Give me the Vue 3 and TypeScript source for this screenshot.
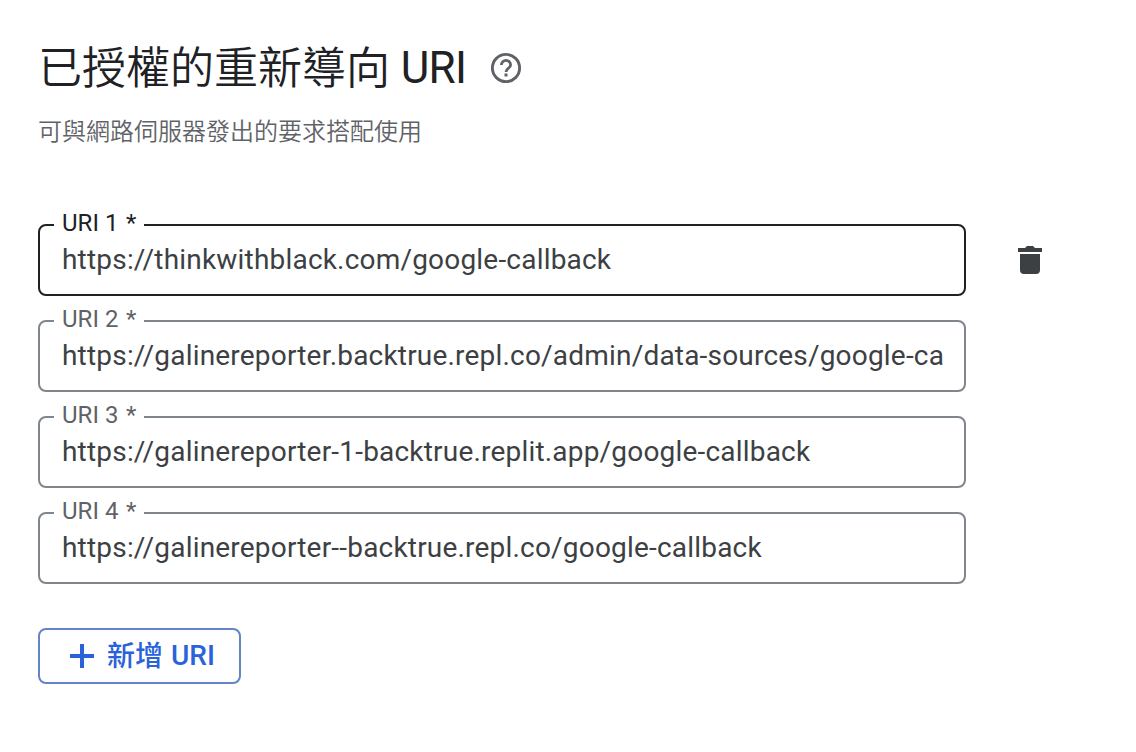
<script setup lang="ts">
import { ref } from 'vue'

interface UriField {
  id: number
  value: string
  active: boolean
}

const fields = ref<UriField[]>([
  { id: 1, value: 'https://thinkwithblack.com/google-callback', active: true },
  { id: 2, value: 'https://galinereporter.backtrue.repl.co/admin/data-sources/google-callback', active: false },
  { id: 3, value: 'https://galinereporter-1-backtrue.replit.app/google-callback', active: false },
  { id: 4, value: 'https://galinereporter--backtrue.repl.co/google-callback', active: false },
])

function addField() {
  fields.value.push({ id: fields.value.length + 1, value: '', active: false })
}

function removeField(index: number) {
  fields.value.splice(index, 1)
}
</script>

<template>
  <main class="page">
    <header class="heading">
      <h1 class="title">已授權的重新導向 <span class="latin">URI</span></h1>
      <svg class="help" viewBox="0 0 32 32" aria-hidden="true">
        <circle cx="16" cy="16" r="13.6" fill="none" stroke="#5f6368" stroke-width="2.9" />
        <path d="M11.4 13a4.6 4.6 0 1 1 9.2 0c0 3.2-4.6 3.2-4.6 7" fill="none" stroke="#5f6368" stroke-width="2.8" />
        <rect x="14.5" y="21.5" width="3" height="3" fill="#5f6368" />
      </svg>
    </header>
    <p class="subtitle">可與網路伺服器發出的要求搭配使用</p>

    <div class="list">
      <div v-for="(field, index) in fields" :key="field.id" class="row">
        <div class="field" :class="{ active: field.active }">
          <label class="label" :for="`uri-${field.id}`">URI {{ field.id }} <span class="star">*</span></label>
          <input :id="`uri-${field.id}`" v-model="field.value" class="input" type="text" spellcheck="false" />
        </div>
        <button v-if="field.active" class="remove" type="button" aria-label="刪除" @click="removeField(index)">
          <svg width="24" height="28" viewBox="0 0 24 28" fill="#3c4043">
            <path d="M0 2h7l2-2h6l2 2h7v4H0zM2 8h20v16a4 4 0 0 1-4 4H6a4 4 0 0 1-4-4z" />
          </svg>
        </button>
      </div>
    </div>

    <button class="add" type="button" @click="addField">
      <svg class="plus" width="24" height="24" viewBox="0 0 24 24" fill="#2962d9">
        <path d="M10 0h4v10h10v4H14v10h-4V14H0v-4h10z" />
      </svg>
      <span class="add-text">新增 <span class="add-latin">URI</span></span>
    </button>
  </main>
</template>

<style>
body {
  background: #fff;
}
</style>

<style scoped>
.page {
  box-sizing: border-box;
  height: 752px;
  padding: 36px 38px 0;
  font-family: Roboto, "Noto Sans CJK TC", sans-serif;
  overflow: hidden;
}
.heading {
  display: flex;
  align-items: center;
  height: 64px;
}
.title {
  margin: 0;
  padding-top: 2px;
  font-size: 44px;
  line-height: 64px;
  font-weight: 350;
  color: #202124;
  white-space: nowrap;
}
.latin {
  font-weight: 400;
  letter-spacing: -0.7px;
  line-height: 1;
  vertical-align: 1px;
}
.help {
  width: 32px;
  height: 32px;
  margin-left: 23.3px;
}
.subtitle {
  margin: 14px 0 0;
  font-size: 24px;
  line-height: 36px;
  font-weight: 350;
  color: #5f6368;
}
.list {
  display: flex;
  flex-direction: column;
  gap: 24px;
  margin-top: 74px;
}
.row {
  display: flex;
  align-items: center;
}
.field {
  position: relative;
  box-sizing: border-box;
  width: 928px;
  height: 72px;
  padding: 0 21px 0 22px;
  border: 2px solid #80868b;
  border-radius: 8px;
}
.field.active {
  border-color: #202124;
}
.label {
  position: absolute;
  top: -19px;
  left: 14px;
  box-sizing: border-box;
  width: 90px;
  padding-left: 8px;
  background: #fff;
  font-size: 24px;
  line-height: 32px;
  letter-spacing: 0.05px;
  color: #5f6368;
  white-space: nowrap;
}
.star {
  margin-left: 1.5px;
}
.active .label {
  color: #202124;
}
.input {
  display: block;
  width: 100%;
  height: 66px;
  padding: 0;
  border: 0;
  outline: 0;
  background: transparent;
  font: 400 28px/40px Roboto, "Noto Sans CJK TC", sans-serif;
  letter-spacing: 0.195px;
  color: #3c4043;
}
.remove {
  display: flex;
  margin-left: 52px;
  padding: 0;
  border: 0;
  background: none;
}
.add {
  display: flex;
  align-items: center;
  box-sizing: border-box;
  width: 203px;
  height: 56px;
  margin-top: 44px;
  padding: 0 0 0 30px;
  border: 2px solid #6484c8;
  border-radius: 8px;
  background: #fff;
  font: 500 28px/40px Roboto, "Noto Sans CJK TC", sans-serif;
  color: #2962d9;
}
.add-text {
  margin-left: 13px;
  padding-top: 2px;
  white-space: nowrap;
}
.add-latin {
  margin-left: 1px;
  line-height: 1;
  vertical-align: 1px;
}
</style>
